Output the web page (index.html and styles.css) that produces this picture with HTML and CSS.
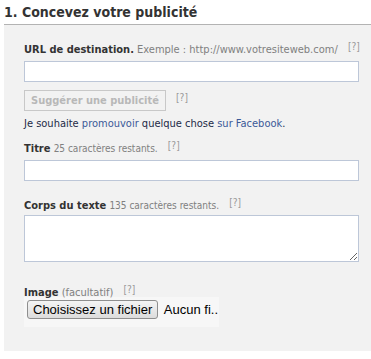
FILE: index.html
```html
<!DOCTYPE html>
<html lang="fr">
<head>
  <meta charset="UTF-8">
  <title>Concevez votre publicité</title>
  <link rel="stylesheet" href="styles.css">
</head>
<body>
  <h2 class="section-title">1. Concevez votre publicité</h2>
  <div class="panel">
    <div class="field">
      <label class="label">URL de destination.</label>
      <span class="hint">Exemple : http://www.votresiteweb.com/</span>
      <span class="help">[?]</span>
      <input type="text" class="text-input">
    </div>

    <div class="suggest-row">
      <button class="suggest-btn" disabled>Suggérer une publicité</button>
      <span class="help">[?]</span>
    </div>
    <p class="promote">Je souhaite <a href="#">promouvoir</a> quelque chose <a href="#">sur Facebook</a>.</p>

    <div class="field">
      <label class="label">Titre</label>
      <span class="hint small">25 caractères restants.</span>
      <span class="help">[?]</span>
      <input type="text" class="text-input">
    </div>

    <div class="field body-field">
      <label class="label">Corps du texte</label>
      <span class="hint small">135 caractères restants.</span>
      <span class="help">[?]</span>
      <textarea class="text-area"></textarea>
    </div>

    <div class="field">
      <label class="label">Image</label>
      <span class="hint">(facultatif)</span>
      <span class="help">[?]</span>
      <div class="file-box">
        <span class="file-btn">Choisissez un fichier</span>
        <span class="file-name">Aucun fi..</span>
      </div>
    </div>
  </div>
</body>
</html>
```

FILE: styles.css
```css
body {
  margin: 0;
  font-family: "DejaVu Sans Condensed", "DejaVu Sans", sans-serif;
  font-size: 11px;
  color: #333;
  background: #fff;
}
.section-title {
  margin: 0 0 0 4px;
  padding: 4px 0 4px 0;
  font-size: 14px;
  font-weight: bold;
  color: #333;
  border-bottom: 1px solid #b3b3b3;
}
.panel {
  margin-left: 4px;
  background: #f2f2f2;
  padding: 16px 12px 0 20px;
  height: 326px;
  box-sizing: border-box;
}
.field {
  margin-bottom: 16px;
  white-space: nowrap;
}
.body-field {
  margin-bottom: 22px;
}
.label {
  font-weight: bold;
  color: #333;
}
.hint {
  color: #808080;
}
.hint.small {
  font-size: 10px;
}
.help {
  color: #999;
  font-size: 10px;
  vertical-align: 3px;
  margin-left: 7px;
}
.text-input {
  display: block;
  box-sizing: border-box;
  width: 100%;
  height: 21px;
  margin-top: 5px;
  border: 1px solid #bdc7d8;
  background: #fff;
}
.text-area {
  display: block;
  box-sizing: border-box;
  width: 100%;
  height: 47px;
  margin-top: 3px;
  border: 1px solid #bdc7d8;
  background: #fff;
  resize: vertical;
}
.suggest-row {
  margin-top: -8px;
}
.suggest-btn {
  font-family: inherit;
  font-size: 11px;
  font-weight: bold;
  color: #b8b8b8;
  background: #f2f2f2;
  border: 1px solid #c8c8c8;
  padding: 3px 6px;
  height: 21px;
}
.promote {
  margin: 6px 0 10px 0;
  color: #1c2a47;
}
.promote a {
  color: #3b5998;
  text-decoration: none;
}
.file-box {
  width: 195px;
  margin-top: -2px;
  background: #f7f7f7;
  padding: 3px 0 8px 3px;
  box-sizing: border-box;
  font-family: "Liberation Sans", Arial, sans-serif;
  font-size: 13px;
  color: #000;
}
.file-btn {
  display: inline-block;
  padding: 1px 5px;
  border: 1px solid #8e8e8e;
  border-radius: 3px;
  background: linear-gradient(#f4f4f4, #dcdcdc);
}
.file-name {
  margin-left: 2px;
}
```
